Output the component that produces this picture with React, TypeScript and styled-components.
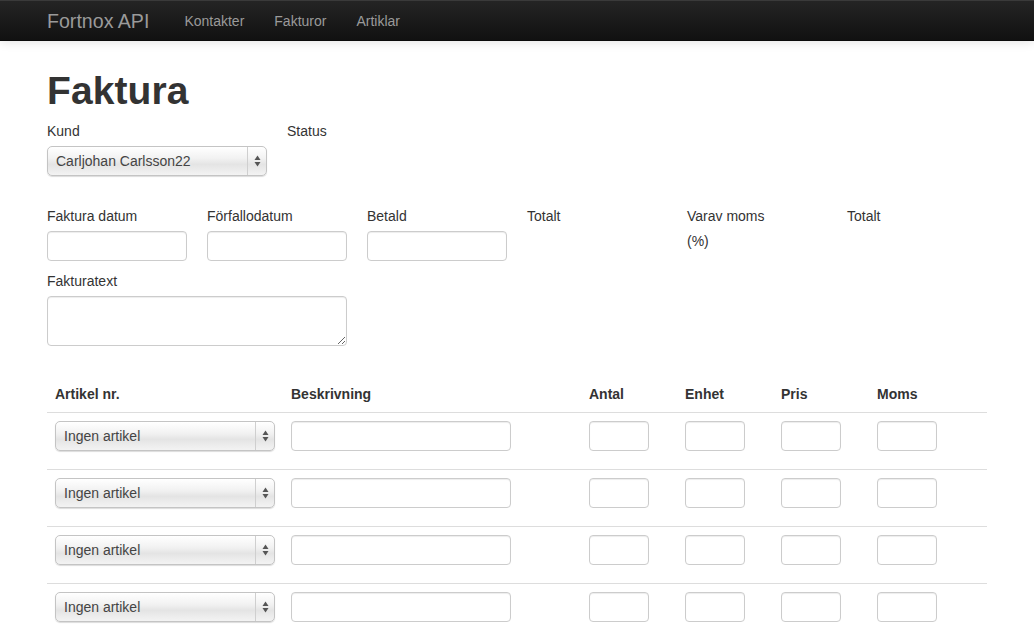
import React from "react";
import styled, { createGlobalStyle } from "styled-components";

const GlobalStyle = createGlobalStyle`
  html, body {
    margin: 0;
    padding: 0;
    overflow: hidden;
    background: #fff;
  }

  body {
    font-family: "Liberation Sans", Arial, sans-serif;
    font-size: 14px;
    line-height: 20px;
    color: #333;
  }
`;

const Navbar = styled.div`
  height: 41px;
  box-sizing: border-box;
  background: linear-gradient(to bottom, #242424, #111111);
  border-top: 1px solid #3a3a3a;
  border-bottom: 1px solid #0a0a0a;
  box-shadow: 0 1px 10px rgba(0, 0, 0, 0.12);
  position: relative;
  z-index: 2;

  .inner {
    width: 940px;
    margin: 0 auto;
    display: flex;
    align-items: center;
    height: 100%;
  }

  .brand {
    font-size: 19.6px;
    font-weight: 200;
    color: #9a9a9a;
    padding: 0 20px 0 0;
    line-height: 20px;
  }
`;

const NavLink = styled.a`
  color: #9a9a9a;
  text-decoration: none;
  font-size: 14px;
  padding: 0 15px;
  line-height: 20px;
`;

const Container = styled.div`
  width: 940px;
  margin: 0 auto;
  padding-top: 20px;
`;

const Title = styled.h1`
  font-size: 39px;
  line-height: 40px;
  font-weight: bold;
  margin: 10px 0 10px;
  color: #333;
  letter-spacing: 0.1px;
`;

const FormRow = styled.div<{ $gapBelow?: number }>`
  display: flex;
  gap: 20px;
  margin-bottom: ${(p) => p.$gapBelow ?? 0}px;
`;

const Field = styled.div<{ $w: number }>`
  width: ${(p) => p.$w}px;
  display: flex;
  flex-direction: column;
  align-items: flex-start;
`;

const Label = styled.label`
  display: block;
  line-height: 20px;
  margin-bottom: 5px;
  color: #333;

  span {
    display: block;
    margin-top: 5px;
  }
`;

const TextInput = styled.input<{ $w: number }>`
  width: ${(p) => p.$w}px;
  height: 30px;
  box-sizing: border-box;
  padding: 4px 6px;
  margin: 0 0 10px;
  border: 1px solid #cccccc;
  border-radius: 4px;
  background: #fff;
  box-shadow: inset 0 1px 1px rgba(0, 0, 0, 0.075);
  font-family: inherit;
  font-size: 14px;
  outline: none;
`;

const TextArea = styled.textarea`
  width: 300px;
  height: 50px;
  box-sizing: border-box;
  padding: 4px 6px;
  margin: 0 0 10px;
  border: 1px solid #cccccc;
  border-radius: 4px;
  box-shadow: inset 0 1px 1px rgba(0, 0, 0, 0.075);
  font-family: inherit;
  font-size: 14px;
  outline: none;
  display: block;
`;

const SelectWrap = styled.div`
  position: relative;
  width: 220px;
  height: 30px;
  margin-bottom: 10px;

  select {
    appearance: none;
    -webkit-appearance: none;
    width: 100%;
    height: 30px;
    box-sizing: border-box;
    padding: 0 26px 0 8px;
    border: 1px solid #c4c4c4;
    border-radius: 5px;
    background: linear-gradient(
      to bottom,
      #ffffff 0%,
      #f2f2f2 40%,
      #e4e4e4 62%,
      #f3f3f3 100%
    );
    box-shadow: 0 1px 1px rgba(0, 0, 0, 0.14);
    font-family: inherit;
    font-size: 14px;
    color: #444;
    outline: none;
  }
`;

const SelectArrows = styled.span`
  position: absolute;
  top: 1px;
  right: 0;
  width: 19px;
  height: 28px;
  border-left: 1px solid #cfcfcf;
  display: flex;
  align-items: center;
  justify-content: center;
  pointer-events: none;
`;

const Select = ({ value }: { value: string }) => (
  <SelectWrap>
    <select defaultValue={value}>
      <option>{value}</option>
    </select>
    <SelectArrows>
      <svg width="7" height="12" viewBox="0 0 7 12">
        <path d="M3.5 0.5 L6.5 5 L0.5 5 Z" fill="#555" />
        <path d="M3.5 11.5 L6.5 7 L0.5 7 Z" fill="#555" />
      </svg>
    </SelectArrows>
  </SelectWrap>
);

const Table = styled.table`
  width: 940px;
  margin-top: 20px;
  border-collapse: collapse;
  border-spacing: 0;

  th {
    text-align: left;
    font-weight: bold;
    padding: 8px;
    line-height: 20px;
    color: #333;
  }

  td {
    padding: 8px;
    border-top: 1px solid #dddddd;
    vertical-align: top;
    line-height: 20px;
  }
`;

const columns = [
  { name: "Artikel nr.", w: 236 },
  { name: "Beskrivning", w: 298 },
  { name: "Antal", w: 96 },
  { name: "Enhet", w: 96 },
  { name: "Pris", w: 96 },
  { name: "Moms", w: 118 },
];

const App = () => {
  const rows = [1, 2, 3, 4];

  return (
    <>
      <GlobalStyle />
      <Navbar>
        <div className="inner">
          <span className="brand">Fortnox API</span>
          <NavLink href="#">Kontakter</NavLink>
          <NavLink href="#">Fakturor</NavLink>
          <NavLink href="#">Artiklar</NavLink>
        </div>
      </Navbar>

      <Container>
        <Title>Faktura</Title>

        <FormRow $gapBelow={20}>
          <Field $w={220}>
            <Label>Kund</Label>
            <Select value="Carljohan Carlsson22" />
          </Field>
          <Field $w={220}>
            <Label>Status</Label>
          </Field>
        </FormRow>

        <FormRow>
          <Field $w={140}>
            <Label>Faktura datum</Label>
            <TextInput $w={140} />
          </Field>
          <Field $w={140}>
            <Label>Förfallodatum</Label>
            <TextInput $w={140} />
          </Field>
          <Field $w={140}>
            <Label>Betald</Label>
            <TextInput $w={140} />
          </Field>
          <Field $w={140}>
            <Label>Totalt</Label>
          </Field>
          <Field $w={140}>
            <Label>
              Varav moms<span>(%)</span>
            </Label>
          </Field>
          <Field $w={140}>
            <Label>Totalt</Label>
          </Field>
        </FormRow>

        <FormRow>
          <Field $w={300}>
            <Label>Fakturatext</Label>
            <TextArea />
          </Field>
        </FormRow>

        <Table>
          <colgroup>
            {columns.map((c) => (
              <col key={c.name} style={{ width: c.w }} />
            ))}
          </colgroup>
          <thead>
            <tr>
              {columns.map((c) => (
                <th key={c.name}>{c.name}</th>
              ))}
            </tr>
          </thead>
          <tbody>
            {rows.map((r) => (
              <tr key={r}>
                <td>
                  <Select value="Ingen artikel" />
                </td>
                <td>
                  <TextInput $w={220} />
                </td>
                <td>
                  <TextInput $w={60} />
                </td>
                <td>
                  <TextInput $w={60} />
                </td>
                <td>
                  <TextInput $w={60} />
                </td>
                <td>
                  <TextInput $w={60} />
                </td>
              </tr>
            ))}
          </tbody>
        </Table>
      </Container>
    </>
  );
};

export default App;
